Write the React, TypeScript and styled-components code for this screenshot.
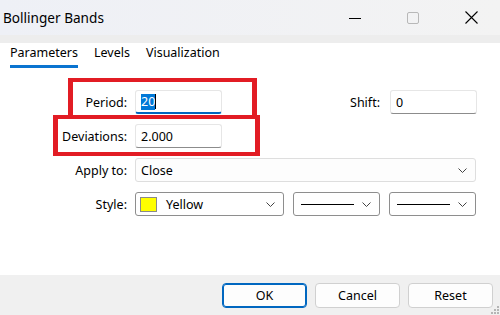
import React from "react";
import styled, { createGlobalStyle, css } from "styled-components";

const GlobalStyle = createGlobalStyle`
  html, body {
    margin: 0;
    padding: 0;
    background: #ffffff;
  }
  body {
    font-family: "Noto Sans", "Open Sans", sans-serif;
    font-size: 12.5px;
    color: #000;
  }
`;

const Window = styled.div`
  position: relative;
  width: 500px;
  height: 315px;
  display: flex;
  flex-direction: column;
  background: #ffffff;
  overflow: hidden;
`;

const TitleBar = styled.div`
  height: 35px;
  display: flex;
  align-items: center;
  background: linear-gradient(90deg, #eef0f6 0%, #f3f3f3 100%);
`;

const Title = styled.div`
  flex: 1;
  padding-left: 3px;
  font-size: 13.6px;
  color: #000;
`;

const CaptionButton = styled.div`
  width: 58px;
  height: 35px;
  display: flex;
  align-items: center;
  justify-content: center;
`;

const TabStrip = styled.div`
  border-top: 8px solid #ededed;
  height: 25px;
  display: flex;
  gap: 16px;
  padding-left: 10px;
`;

const Tab = styled.div<{ $active?: boolean }>`
  height: 25px;
  box-sizing: border-box;
  padding-top: 1px;
  line-height: 18px;
  border-bottom: 3px solid ${(p) => (p.$active ? "#0a74d0" : "transparent")};
`;

const Form = styled.div`
  flex: 1;
  display: flex;
  flex-direction: column;
  gap: 10px;
  padding-top: 22px;
`;

const Row = styled.div`
  display: flex;
  align-items: center;
  height: 24px;
`;

const Label = styled.div<{ $width?: number }>`
  width: ${(p) => p.$width ?? 127}px;
  margin-right: ${(p) => (p.$width ? 10 : 8)}px;
  text-align: right;
  white-space: nowrap;
`;

const TextInput = styled.div<{ $focused?: boolean }>`
  width: 87px;
  height: 24px;
  box-sizing: border-box;
  display: flex;
  align-items: center;
  padding-left: 5px;
  border: 1px solid #e6e6e6;
  border-bottom: ${(p) => (p.$focused ? "2px solid #0067c0" : "1px solid #8c8c8c")};
  border-radius: 3px;
  background: #ffffff;
`;

const Selected = styled.span`
  background: #0078d7;
  color: #ffffff;
  line-height: 16px;
`;

const Caret = styled.span`
  display: inline-block;
  width: 1px;
  height: 15px;
  background: #000;
`;

const Select = styled.div<{ $width: number; $strong?: boolean }>`
  width: ${(p) => p.$width}px;
  height: 24px;
  box-sizing: border-box;
  display: flex;
  align-items: center;
  padding: 0 8px 0 5px;
  border: 1px solid ${(p) => (p.$strong ? "#8e8e8e" : "#dedede")};
  border-radius: 3px;
  background: #fdfdfd;
  ${(p) =>
    p.$strong &&
    css`
      background: #ffffff;
    `}
  & + & {
    margin-left: 9px;
  }
`;

const SelectValue = styled.div`
  flex: 1;
  display: flex;
  align-items: center;
  white-space: nowrap;
`;

const Swatch = styled.span<{ $color: string }>`
  width: 15px;
  height: 13px;
  margin-left: -1px;
  margin-right: 9px;
  border: 1px solid #8a8a8a;
  background: ${(p) => p.$color};
`;

const LineSample = styled.span`
  display: block;
  width: 53px;
  height: 1px;
  margin-left: 2px;
  background: #000;
`;

const Footer = styled.div`
  height: 40px;
  display: flex;
  align-items: center;
  justify-content: flex-end;
  gap: 8px;
  padding-right: 7px;
  background: #f0f0f0;
`;

const Button = styled.div<{ $default?: boolean }>`
  width: 85px;
  height: 25px;
  box-sizing: border-box;
  display: flex;
  align-items: center;
  justify-content: center;
  border-radius: 4px;
  background: #fdfdfd;
  border: 1px solid #d0d0d0;
  ${(p) =>
    p.$default &&
    css`
      border-color: #0067c0;
      box-shadow: inset 0 0 0 1px #0067c0;
    `}
`;

const Highlight = styled.div<{ $left: number; $top: number; $width: number; $height: number }>`
  position: absolute;
  left: ${(p) => p.$left}px;
  top: ${(p) => p.$top}px;
  width: ${(p) => p.$width}px;
  height: ${(p) => p.$height}px;
  box-sizing: border-box;
  border: 4px solid #e21c24;
  border-left-width: 5px;
  border-right-width: 5px;
  pointer-events: none;
`;

const Grip = styled.svg`
  position: absolute;
  right: 1px;
  bottom: 1px;
`;

const Chevron = () => (
  <svg width="9" height="5" viewBox="0 0 9 5">
    <path d="M0.5 0.5 L4.5 4.5 L8.5 0.5" fill="none" stroke="#444" strokeWidth="1" />
  </svg>
);

const App: React.FC = () => {
  return (
    <>
      <GlobalStyle />
      <Window>
        <TitleBar>
          <Title>Bollinger Bands</Title>
          <CaptionButton>
            <svg width="12" height="12" viewBox="0 0 12 12">
              <path d="M0 6.5 H12" stroke="#000" strokeWidth="1" />
            </svg>
          </CaptionButton>
          <CaptionButton>
            <svg width="12" height="12" viewBox="0 0 12 12">
              <rect x="0.5" y="0.5" width="11" height="11" rx="1.5" fill="none" stroke="#b8b8b8" />
            </svg>
          </CaptionButton>
          <CaptionButton>
            <svg width="13" height="13" viewBox="0 0 13 13">
              <path d="M0.5 0.5 L12.5 12.5 M12.5 0.5 L0.5 12.5" stroke="#000" strokeWidth="1.1" />
            </svg>
          </CaptionButton>
        </TitleBar>

        <TabStrip>
          <Tab $active>Parameters</Tab>
          <Tab>Levels</Tab>
          <Tab>Visualization</Tab>
        </TabStrip>

        <Form>
          <Row>
            <Label>Period:</Label>
            <TextInput $focused>
              <Selected>20</Selected>
              <Caret />
            </TextInput>
            <Label $width={158}>Shift:</Label>
            <TextInput>0</TextInput>
          </Row>
          <Row>
            <Label>Deviations:</Label>
            <TextInput>2.000</TextInput>
          </Row>
          <Row>
            <Label>Apply to:</Label>
            <Select $width={341}>
              <SelectValue>Close</SelectValue>
              <Chevron />
            </Select>
          </Row>
          <Row>
            <Label>Style:</Label>
            <Select $width={149} $strong>
              <SelectValue>
                <Swatch $color="#ffff00" />
                Yellow
              </SelectValue>
              <Chevron />
            </Select>
            <Select $width={87} $strong>
              <SelectValue>
                <LineSample />
              </SelectValue>
              <Chevron />
            </Select>
            <Select $width={87} $strong>
              <SelectValue>
                <LineSample />
              </SelectValue>
              <Chevron />
            </Select>
          </Row>
        </Form>

        <Footer>
          <Button $default>OK</Button>
          <Button>Cancel</Button>
          <Button>Reset</Button>
        </Footer>

        <Highlight $left={68} $top={78} $width={189} $height={41} />
        <Highlight $left={53} $top={115} $width={207} $height={41} />

        <Grip width="8" height="8" viewBox="0 0 8 8">
          <rect x="6" y="0" width="2" height="2" fill="#b5b5b5" />
          <rect x="3" y="3" width="2" height="2" fill="#b5b5b5" />
          <rect x="6" y="3" width="2" height="2" fill="#b5b5b5" />
          <rect x="0" y="6" width="2" height="2" fill="#b5b5b5" />
          <rect x="3" y="6" width="2" height="2" fill="#b5b5b5" />
          <rect x="6" y="6" width="2" height="2" fill="#b5b5b5" />
        </Grip>
      </Window>
    </>
  );
};

export default App;
